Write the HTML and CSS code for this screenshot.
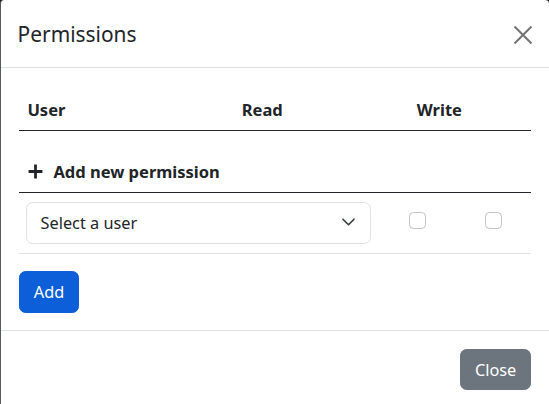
FILE: index.html
```html
<!DOCTYPE html>
<html lang="en">
<head>
<meta charset="utf-8">
<title>Permissions</title>
<link rel="stylesheet" href="styles.css">
</head>
<body>
<div class="modal">
  <header class="modal-header">
    <h5 class="modal-title">Permissions</h5>
    <button class="btn-close" type="button" aria-label="Close">
      <svg width="20" height="20" viewBox="0 0 20 20"><path d="M1.5 1.5 L18.5 18.5 M18.5 1.5 L1.5 18.5" stroke="#737373" stroke-width="2" fill="none"/></svg>
    </button>
  </header>
  <div class="modal-body">
    <div class="thead">
      <div class="th">User</div>
      <div class="th">Read</div>
      <div class="th">Write</div>
    </div>
    <div class="add-title">
      <svg class="plus" width="17" height="17" viewBox="0 0 16 16"><path d="M8 1.5 V14.5 M1.5 8 H14.5" stroke="#212529" stroke-width="2.6" fill="none"/></svg>
      <span>Add new permission</span>
    </div>
    <div class="trow">
      <div class="td">
        <div class="form-select">
          <span>Select a user</span>
          <svg class="chev" width="13" height="8" viewBox="0 0 13 8"><path d="M1 1.2l5.5 5.5 5.5-5.5" stroke="#343a40" stroke-width="1.6" stroke-linecap="round" stroke-linejoin="round" fill="none"/></svg>
        </div>
      </div>
      <div class="td center"><span class="check"></span></div>
      <div class="td center"><span class="check"></span></div>
    </div>
    <div class="actions">
      <button class="btn btn-primary" type="button">Add</button>
    </div>
  </div>
  <footer class="modal-footer">
    <button class="btn btn-secondary" type="button">Close</button>
  </footer>
</div>
</body>
</html>
```

FILE: styles.css
```css
html {
  background: #1c1c1c;
}
body {
  margin: 0;
  font-family: "Noto Sans", "Open Sans", sans-serif;
  font-size: 16.3px;
  line-height: 26.4px;
  color: #212529;
}
.modal {
  box-sizing: border-box;
  width: 549px;
  min-height: 404px;
  background: #fff;
  border-left: 1px solid #555a5c;
  border-radius: 4px 4px 0 0;
}
.modal-header {
  display: flex;
  align-items: center;
  justify-content: space-between;
  height: 68px;
  box-sizing: border-box;
  padding: 1px 16px 0 16.6px;
  border-bottom: 1px solid #dee2e6;
}
.modal-title {
  margin: 0;
  font-size: 20.9px;
  line-height: 33px;
  font-weight: 400;
}
.btn-close {
  border: 0;
  background: transparent;
  padding: 0;
  width: 20px;
  height: 20px;
  display: flex;
  margin-top: 1px;
}
.modal-body {
  padding: 17.6px 17.6px 17px 17.6px;
}
.thead {
  display: grid;
  grid-template-columns: 214.4px 175px 1fr;
  border-bottom: 1px solid #212529;
}
.th {
  padding: 11px 8.8px 6.6px;
  font-weight: 700;
  font-size: 16.5px;
}
.add-title {
  margin-top: 17.6px;
  display: flex;
  align-items: center;
  gap: 9px;
  padding: 10.6px 8.8px 7px;
  font-weight: 700;
  font-size: 16.5px;
  border-bottom: 1px solid #212529;
}
.plus {
  flex: none;
}
.trow {
  display: grid;
  grid-template-columns: 361.4px 75px 1fr;
  border-bottom: 1px solid #dee2e6;
}
.td {
  padding: 8.8px;
}
.td.center {
  display: flex;
  justify-content: center;
  align-items: flex-start;
}
.form-select {
  box-sizing: border-box;
  height: 41.8px;
  display: flex;
  align-items: center;
  justify-content: space-between;
  padding: 1px 15.5px 0 13.2px;
  border: 1px solid #dee2e6;
  border-radius: 6.6px;
  margin-left: -1px;
}
.chev {
  margin-bottom: 3px;
}
.check {
  display: block;
  box-sizing: border-box;
  width: 17px;
  height: 17px;
  margin-top: 10.5px;
  border: 1px solid #c4c4c4;
  border-radius: 4.4px;
  background: #fff;
}
.actions {
  margin-top: 17.6px;
  display: flex;
}
.btn {
  font-family: inherit;
  font-size: 16.3px;
  line-height: 26.4px;
  height: 41.8px;
  box-sizing: border-box;
  padding: 1px 14.2px 0;
  border-radius: 6.6px;
  color: #fff;
  border: 1px solid transparent;
}
.btn-primary {
  background: #0c5fd8;
  border-color: #0c5fd8;
}
.btn-secondary {
  background: #6c757d;
  border-color: #6c757d;
}
.modal-footer {
  display: flex;
  justify-content: flex-end;
  padding: 17.6px 17.6px;
  border-top: 1px solid #dee2e6;
}
```
